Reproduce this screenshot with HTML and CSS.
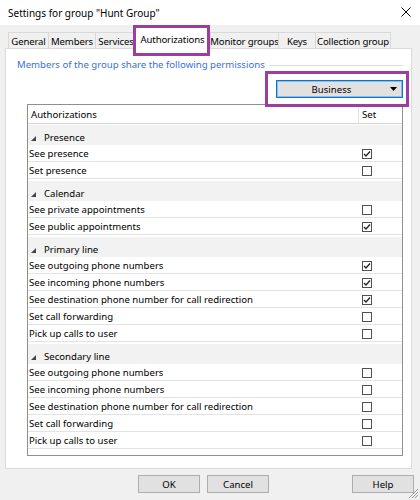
FILE: index.html
```html
<!DOCTYPE html>
<html>
<head>
<meta charset="utf-8">
<link rel="stylesheet" href="styles.css">
</head>
<body>
<div class="window">
  <div class="titlebar">
    <span class="title">Settings for group "Hunt Group"</span>
    <svg class="close" width="10" height="10" viewBox="0 0 10 10"><path d="M0.5 0.5 L9.5 9.5 M9.5 0.5 L0.5 9.5" stroke="#000" stroke-width="1" fill="none"/></svg>
  </div>
  <div class="tabstrip">
    <div class="tab t-general">General</div>
    <div class="tab t-members">Members</div>
    <div class="tab t-services">Services</div>
    <div class="tab active t-auth">Authorizations</div>
    <div class="tab t-monitor">Monitor groups</div>
    <div class="tab t-keys">Keys</div>
    <div class="tab t-collection">Collection group</div>
  </div>
  <div class="panel">
    <div class="group-label"><span>Members of the group share the following permissions</span><div class="rule"></div></div>
    <div class="combo-row">
      <div class="combo"><span class="combo-text">Business</span><svg class="combo-arrow" width="7" height="4" viewBox="0 0 7 4"><polygon points="0,0 7,0 3.5,4" fill="#000"/></svg></div>
    </div>
    <div class="list">
      <div class="list-head"><div class="h-name">Authorizations</div><div class="h-set">Set</div></div>

      <div class="grp"><svg class="tri" width="5" height="5" viewBox="0 0 5 5"><polygon points="5,0 5,5 0,5" fill="#444"/></svg>Presence</div>
      <div class="row"><span class="row-name">See presence</span><span class="row-set"><span class="cb"><svg width="8" height="8" viewBox="0 0 8 8"><path d="M1 4 L3 6 L7 1.5" stroke="#222" stroke-width="1.3" fill="none"/></svg></span></span></div>
      <div class="row"><span class="row-name">Set presence</span><span class="row-set"><span class="cb"></span></span></div>

      <div class="grp"><svg class="tri" width="5" height="5" viewBox="0 0 5 5"><polygon points="5,0 5,5 0,5" fill="#444"/></svg>Calendar</div>
      <div class="row"><span class="row-name">See private appointments</span><span class="row-set"><span class="cb"></span></span></div>
      <div class="row"><span class="row-name">See public appointments</span><span class="row-set"><span class="cb"><svg width="8" height="8" viewBox="0 0 8 8"><path d="M1 4 L3 6 L7 1.5" stroke="#222" stroke-width="1.3" fill="none"/></svg></span></span></div>

      <div class="grp"><svg class="tri" width="5" height="5" viewBox="0 0 5 5"><polygon points="5,0 5,5 0,5" fill="#444"/></svg>Primary line</div>
      <div class="row"><span class="row-name">See outgoing phone numbers</span><span class="row-set"><span class="cb"><svg width="8" height="8" viewBox="0 0 8 8"><path d="M1 4 L3 6 L7 1.5" stroke="#222" stroke-width="1.3" fill="none"/></svg></span></span></div>
      <div class="row"><span class="row-name">See incoming phone numbers</span><span class="row-set"><span class="cb"><svg width="8" height="8" viewBox="0 0 8 8"><path d="M1 4 L3 6 L7 1.5" stroke="#222" stroke-width="1.3" fill="none"/></svg></span></span></div>
      <div class="row"><span class="row-name">See destination phone number for call redirection</span><span class="row-set"><span class="cb"><svg width="8" height="8" viewBox="0 0 8 8"><path d="M1 4 L3 6 L7 1.5" stroke="#222" stroke-width="1.3" fill="none"/></svg></span></span></div>
      <div class="row"><span class="row-name">Set call forwarding</span><span class="row-set"><span class="cb"></span></span></div>
      <div class="row"><span class="row-name">Pick up calls to user</span><span class="row-set"><span class="cb"></span></span></div>

      <div class="grp"><svg class="tri" width="5" height="5" viewBox="0 0 5 5"><polygon points="5,0 5,5 0,5" fill="#444"/></svg>Secondary line</div>
      <div class="row"><span class="row-name">See outgoing phone numbers</span><span class="row-set"><span class="cb"></span></span></div>
      <div class="row"><span class="row-name">See incoming phone numbers</span><span class="row-set"><span class="cb"></span></span></div>
      <div class="row"><span class="row-name">See destination phone number for call redirection</span><span class="row-set"><span class="cb"></span></span></div>
      <div class="row"><span class="row-name">Set call forwarding</span><span class="row-set"><span class="cb"></span></span></div>
      <div class="row"><span class="row-name">Pick up calls to user</span><span class="row-set"><span class="cb"></span></span></div>
    </div>
  </div>
  <div class="buttons">
    <div class="btn">OK</div>
    <div class="btn btn-cancel">Cancel</div>
    <div class="btn">Help</div>
  </div>
  <svg class="grip" width="10" height="10" viewBox="0 0 10 10"><path d="M9 3 L3 9 M9 6 L6 9 M9 0 L0 9" stroke="#9a9a9a" stroke-width="1" fill="none"/></svg>
  <div class="hl hl-tab"></div>
  <div class="hl hl-combo"></div>
</div>
</body>
</html>
```
FILE: styles.css
```css
html, body {
  margin: 0;
  padding: 0;
}
body {
  background: #f0f0f0;
  font-family: "Noto Sans", "Open Sans", sans-serif;
  font-size: 9.6px;
  color: #000;
}
.window {
  width: 420px;
  height: 500px;
  position: relative;
  display: flex;
  flex-direction: column;
  overflow: hidden;
}
.titlebar {
  height: 25px;
  background: #fff;
  display: flex;
  align-items: center;
  justify-content: space-between;
  padding: 0 9px 0 8px;
  box-sizing: border-box;
  font-size: 10px;
}
.close {
  display: block;
  margin-top: -1px;
}
.tabstrip {
  height: 23px;
  display: flex;
  align-items: flex-end;
  padding-left: 8px;
  box-sizing: border-box;
  position: relative;
  z-index: 1;
}
.tab {
  height: 16px;
  border: 1px solid #d9d9d9;
  border-bottom: none;
  background: #f0f0f0;
  box-sizing: border-box;
  display: flex;
  align-items: center;
  justify-content: center;
  padding-top: 2px;
  margin-left: -1px;
  white-space: nowrap;
  letter-spacing: -0.15px;
}
.t-general { width: 41px; margin-left: 0; }
.t-members { width: 48px; }
.t-services { width: 42px; }
.t-auth { width: 75px; }
.t-monitor { width: 69px; margin-left: 0; }
.t-keys { width: 38px; }
.t-collection { width: 76px; }
.tab.active {
  height: 22px;
  margin-bottom: -1px;
  margin-left: -2px;
  background: #fff;
  position: relative;
  z-index: 2;
  align-items: flex-start;
  padding-top: 5px;
}
.panel {
  margin-left: 5px;
  width: 407px;
  height: 421px;
  border: 1px solid #dadada;
  background: #fff;
  box-sizing: border-box;
  padding: 9px 8px 0 11px;
  display: flex;
  flex-direction: column;
}
.group-label {
  display: flex;
  align-items: center;
  height: 14px;
  line-height: 14px;
  color: #3a6fd6;
  white-space: nowrap;
}
.rule {
  flex: 1;
  height: 1px;
  background: #dde2e8;
  margin-left: 4px;
}
.combo-row {
  display: flex;
  justify-content: flex-end;
  margin-top: 8px;
}
.combo {
  width: 127px;
  height: 18px;
  box-sizing: border-box;
  border: 1px solid #0078d7;
  box-shadow: inset 0 0 0 1px rgba(0, 120, 215, 0.35);
  background: #e1e1e1;
  display: flex;
  align-items: center;
}
.combo-text {
  flex: 1;
  text-align: center;
}
.combo-arrow {
  display: block;
  margin: 0 5px 0 4px;
}
.list {
  margin-top: 6px;
  margin-left: 10px;
  height: 352px;
  border: 1px solid #8f8f8f;
  box-sizing: border-box;
  background: #fff;
  overflow: hidden;
  display: flex;
  flex-direction: column;
}
.list-head {
  display: flex;
  flex: none;
  height: 19px;
  border-bottom: 1px solid #d5d5d5;
  box-sizing: border-box;
  line-height: 19px;
}
.h-name {
  flex: 1;
  padding-left: 3px;
}
.h-set {
  width: 44px;
  border-left: 1px solid #e3e3e3;
  box-sizing: border-box;
  padding-left: 3px;
}
.grp {
  flex: none;
  margin-top: 2px;
  height: 20px;
  background: #f2f2f2;
  box-sizing: border-box;
  padding: 5px 0 0 3px;
  line-height: 15px;
  display: flex;
  align-items: center;
}
.list-head + .grp {
  margin-top: 1px;
}
.tri {
  display: block;
  margin-right: 8px;
  margin-top: 1px;
}
.row {
  flex: none;
  display: flex;
  align-items: center;
  height: 17px;
  border-bottom: 1px solid #e3e3e3;
  box-sizing: border-box;
  white-space: nowrap;
}
.row-name {
  flex: 1;
  padding-left: 1px;
}
.row-set {
  width: 44px;
  padding-left: 4px;
  box-sizing: border-box;
  display: flex;
  align-items: center;
}
.cb {
  width: 10px;
  height: 10px;
  border: 1px solid #505050;
  box-sizing: border-box;
  background: #fff;
  display: flex;
  align-items: center;
  justify-content: center;
  margin-top: 1px;
}
.cb svg {
  display: block;
}
.buttons {
  display: flex;
  justify-content: flex-end;
  margin-top: 6px;
  padding-right: 6px;
}
.btn {
  width: 62px;
  height: 18px;
  border: 1px solid #adadad;
  background: #e1e1e1;
  box-sizing: border-box;
  display: flex;
  align-items: center;
  justify-content: center;
  margin-left: 7px;
}
.btn-cancel {
  margin-right: 76px;
}
.grip {
  position: absolute;
  right: 1px;
  bottom: 1px;
}
.hl {
  position: absolute;
  border: 3px solid #9c3d9f;
  box-sizing: border-box;
  pointer-events: none;
  z-index: 5;
}
.hl-tab {
  left: 133px;
  top: 25px;
  width: 77px;
  height: 31px;
}
.hl-combo {
  left: 265px;
  top: 71px;
  width: 144px;
  height: 36px;
}
```
